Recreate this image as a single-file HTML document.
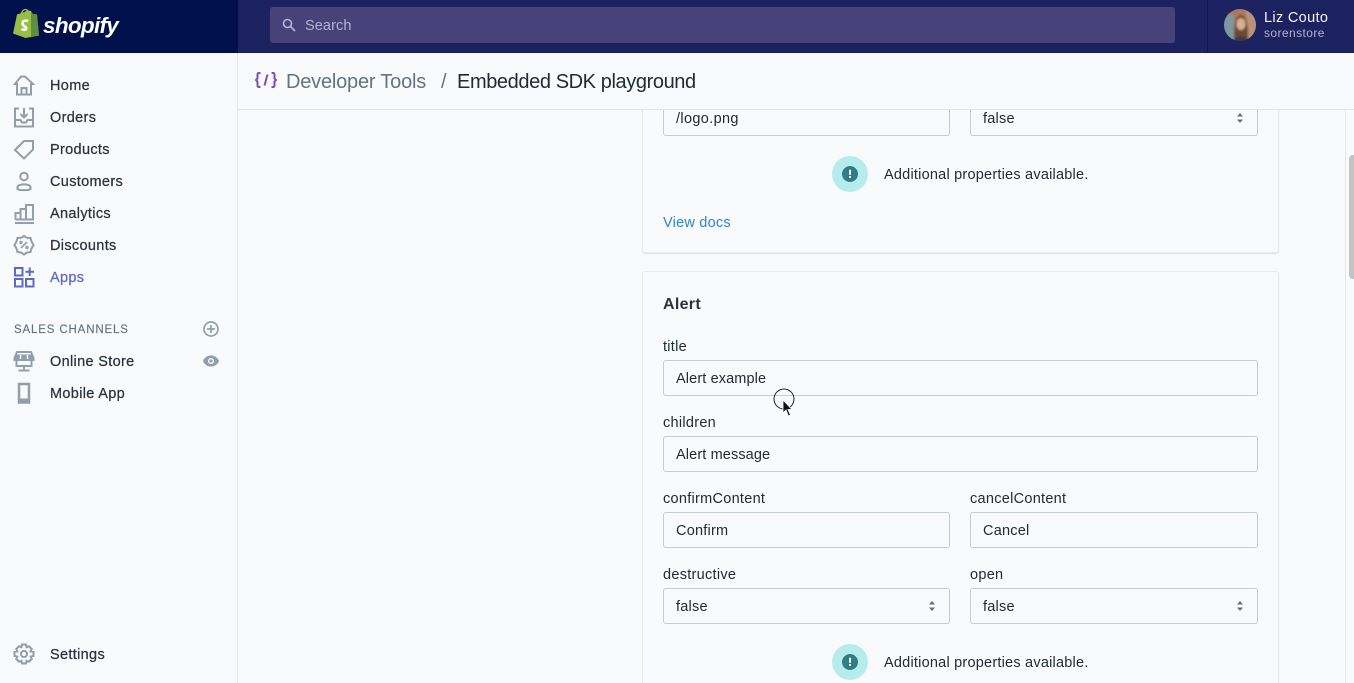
<!DOCTYPE html>
<html><head><meta charset="utf-8"><style>
*{box-sizing:border-box}
html,body{margin:0;padding:0;width:1354px;height:683px;overflow:hidden;background:#f9fafb;font-family:"Liberation Sans",sans-serif;color:#212b36}
#w{position:relative;width:1354px;height:683px;overflow:hidden;background:#f9fafb}
.a{position:absolute}
.t{position:absolute;font-size:14.5px;line-height:20px;white-space:nowrap;letter-spacing:.22px}
.nav{position:absolute;left:50px;font-size:14.5px;line-height:20px;font-weight:400;letter-spacing:.33px;color:#2a3440;-webkit-text-stroke:.25px #2a3440;white-space:nowrap}
.ic{position:absolute;left:13px;width:22px;height:22px;fill:none;stroke:#919eab;stroke-width:2}
.in{position:absolute;height:36px;border:1px solid #c4cdd5;border-radius:3px;background:#f9fafb;font-size:14.5px;line-height:36px;padding-left:12px;letter-spacing:.22px;color:#212b36;white-space:nowrap}
.lb{position:absolute;font-size:14.5px;line-height:20px;letter-spacing:.28px;color:#212b36;white-space:nowrap}
.ar{position:absolute;right:13px;top:11px;width:8px;height:12px}
.card{position:absolute;left:642px;width:637px;background:#f9fafb;border:1px solid #e8eaed;border-radius:3px;box-shadow:0 1px 1px rgba(33,43,54,.12)}
</style></head><body><div id="w">
<!-- top bar -->
<div class="a" style="left:0;top:0;width:1354px;height:53px;background:#1c2260"></div>
<div class="a" style="left:0;top:0;width:238px;height:53px;background:#00104b"></div>
<div class="a" style="left:1207px;top:0;width:1px;height:53px;background:#101650"></div>
<svg class="a" style="left:12px;top:8px" width="28" height="31" viewBox="0 0 28 31"><path d="M1 25.5 5 6.5 17 2.5 19 3 21 6 25 6.5 27 27.5 13.5 30Z" fill="#95bf47"/><path d="M19 3 21 6 25 6.5 27 27.5 19 29Z" fill="#5e8e3e"/><path d="M9 8C9 4 11.500 1.500 13.500 1.500S17 3.500 17 7M12.500 7C12.500 5 14 3 15.500 3" fill="none" stroke="#95bf47" stroke-width="1.300"/><path d="M16 13.200C14 12 10.500 12.500 10.500 15.500C10.500 18.300 14.200 18 14.200 20.300C14.200 22 11.800 22.300 9.500 21" fill="none" stroke="#fff" stroke-width="2.500"/></svg>
<div class="a" style="left:43px;top:11px;font-style:italic;font-weight:700;font-size:22.5px;line-height:30px;color:#fff;letter-spacing:-.7px">shopify</div>
<div class="a" style="left:270px;top:7px;width:905px;height:36px;background:#47437a;border-radius:3px"></div>
<svg class="a" style="left:281px;top:17px" width="16" height="16" viewBox="0 0 16 16" fill="none" stroke="#b9b7d1" stroke-width="1.600"><circle cx="6.500" cy="6.500" r="4"/><path d="M9.500 9.500 14 14"/></svg>
<div class="t" style="left:305px;top:16px;color:#b4b2cd;letter-spacing:.1px">Search</div>
<svg class="a" style="left:1224px;top:9px" width="32" height="32" viewBox="0 0 32 32"><defs><clipPath id="c"><circle cx="16" cy="16" r="16"/></clipPath><filter id="b"><feGaussianBlur stdDeviation="1"/></filter></defs><g clip-path="url(#c)"><g filter="url(#b)"><rect x="-2" y="-2" width="36" height="36" fill="#a9785f"/><rect x="-2" y="6" width="12" height="28" fill="#7f96a0"/><rect x="22" y="-2" width="12" height="36" fill="#b99377"/><path d="M10 32C10 14 11 7 17 6 24 7 24 18 24 32Z" fill="#6e4936"/><ellipse cx="17" cy="15" rx="4.500" ry="6" fill="#dcae93"/><path d="M9 34C10 25 24 25 26 34Z" fill="#3c3a49"/></g></g></svg>
<div class="a" style="left:1264px;top:9px;font-size:14.500px;line-height:19px;letter-spacing:.33px;color:#f4f4f8">Liz Couto</div>
<div class="a" style="left:1264px;top:25px;font-size:12px;line-height:16px;letter-spacing:.42px;color:#b0b1cc">sorenstore</div>
<!-- sidebar -->
<div class="a" style="left:237px;top:53px;width:1px;height:630px;background:#e3e6e9"></div>
<svg class="ic" style="top:74px" viewBox="0 0 22 22"><path d="M2 10 8 2.500H12L20 10H18V20.500H4V10ZM8.500 20V14H13.500V20"/></svg>
<div class="nav" style="top:76px">Home</div>
<svg class="ic" style="top:106px" viewBox="0 0 22 22"><path d="M6 2.500H2V20.500H20V2.500H16M2 14H7.500L9 16.500H13L14.500 14H20M11 2V11M7.500 8 11 11.500 14.500 8"/></svg>
<div class="nav" style="top:108px">Orders</div>
<svg class="ic" style="top:138px" viewBox="0 0 22 22"><path d="M2 12 11 3H20V11.500L11 20.500ZM16 7.500H16.100"/></svg>
<div class="nav" style="top:140px">Products</div>
<svg class="ic" style="top:170px" viewBox="0 0 22 22"><circle cx="11" cy="6.500" r="3.800"/><path d="M4.500 17C4.500 13.500 17.500 13.500 17.500 17V19C17.500 20.500 4.500 20.500 4.500 19Z"/></svg>
<div class="nav" style="top:172px">Customers</div>
<svg class="ic" style="top:202px" viewBox="0 0 22 22"><path d="M2 21H21M2.500 17.500V11H7.500V17.500M7.500 17.500V7H13V17.500M13 17.500V3H20V17.500H2.500"/></svg>
<div class="nav" style="top:204px">Analytics</div>
<svg class="ic" style="top:234px" viewBox="0 0 22 22"><path d="M11 2 14 3.800 17.500 4 18.500 7.500 20.500 11 18.500 14.500 17.500 18 14 18.500 11 20.500 8 18.500 4.500 18 3.500 14.500 1.500 11 3.500 7.500 4.500 4 8 3.800Z"/><path d="M14 8 8 14" stroke-width="1.600"/><circle cx="8" cy="8.500" r=".7"/><circle cx="14" cy="13.500" r=".7"/></svg>
<div class="nav" style="top:236px">Discounts</div>
<svg class="ic" style="top:266px;stroke:#5c6ac4" viewBox="0 0 22 22"><rect x="2" y="2" width="7.500" height="7.500"/><rect x="2" y="13" width="7.500" height="7.500"/><rect x="13" y="13" width="7.500" height="7.500"/><path d="M16.700 1.500V10M12.500 5.700H21"/></svg>
<div class="nav" style="top:268px;color:#5c6ac4;-webkit-text-stroke:.25px #5c6ac4">Apps</div>
<div class="a" style="left:14px;top:322px;font-size:11.500px;line-height:16px;letter-spacing:.85px;color:#637381;-webkit-text-stroke:.15px #637381">SALES CHANNELS</div>
<svg class="a" style="left:203px;top:321px" width="16" height="16" viewBox="0 0 16 16" fill="none" stroke="#919eab" stroke-width="1.700"><circle cx="8" cy="8" r="7"/><path d="M8 4V12M4 8H12"/></svg>
<svg class="ic" style="top:350px" viewBox="0 0 22 22"><path d="M4 2H18L20.500 8V10H1.500V8ZM3.500 10V16H18.500V10M11 16V20M5.500 20.500H16.500"/><path d="M2 4.500H20V9H2Z" fill="#919eab" stroke="none"/><path d="M7.500 5V9M14.500 5V9" stroke="#f9fafb" stroke-width="1.500"/></svg>
<div class="nav" style="top:352px">Online Store</div>
<svg class="a" style="left:203px;top:355px" width="16" height="12" viewBox="0 0 16 12"><path d="M0 6C3 -1.500 13 -1.500 16 6 13 13.500 3 13.500 0 6Z" fill="#919eab"/><circle cx="8" cy="6" r="3" fill="#f9fafb"/><circle cx="8" cy="6" r="1.600" fill="#919eab"/></svg>
<svg class="ic" style="top:382px" viewBox="0 0 22 22"><path d="M6 2H16V20.500H6Z" stroke-width="2.500"/><path d="M6 17.500H16V20.500H6Z" fill="#919eab"/></svg>
<div class="nav" style="top:384px">Mobile App</div>
<svg class="ic" style="top:643px" viewBox="0 0 22 22"><path d="M9 1.500H13L13.600 4.300 16 3.300 18.700 6 17.500 8.400 20.500 9V13L17.700 13.600 18.700 16 16 18.700 13.600 17.700 13 20.500H9L8.400 17.700 6 18.700 3.300 16 4.300 13.600 1.500 13V9L4.300 8.400 3.300 6 6 3.300 8.400 4.300Z"/><circle cx="11" cy="11" r="3"/></svg>
<div class="nav" style="top:645px">Settings</div>
<!-- main cards -->
<div class="card" style="top:90px;height:163px"></div>
<div class="card" style="top:271px;height:430px"></div>
<div class="in" style="left:663px;top:100px;width:287px;letter-spacing:.35px">/logo.png</div>
<div class="in" style="left:970px;top:100px;width:288px">false<svg class="ar" viewBox="0 0 8 12"><path d="M4 1 7 4.500H1ZM4 11 1 7.500H7Z" fill="#5f6d7c"/></svg></div>
<div class="a" style="left:832px;top:156px;width:36px;height:36px;border-radius:50%;background:#b7ecec"></div>
<svg class="a" style="left:842px;top:166px" width="16" height="16" viewBox="0 0 16 16"><circle cx="8" cy="8" r="8" fill="#2f7d87"/><rect x="7" y="3.800" width="2" height="5" fill="#fff"/><rect x="7" y="10" width="2" height="2" fill="#fff"/></svg>
<div class="t" style="left:884px;top:165px">Additional properties available.</div>
<div class="t" style="left:663px;top:213px;color:#2a85d5">View docs</div>
<div class="a" style="left:663px;top:295px;font-size:16px;line-height:20px;font-weight:700;letter-spacing:.3px;color:#2a3440">Alert</div>
<div class="lb" style="left:663px;top:337px">title</div>
<div class="in" style="left:663px;top:360px;width:595px;letter-spacing:.12px">Alert example</div>
<div class="lb" style="left:663px;top:413px">children</div>
<div class="in" style="left:663px;top:436px;width:595px;letter-spacing:.12px">Alert message</div>
<div class="lb" style="left:663px;top:489px">confirmContent</div>
<div class="lb" style="left:970px;top:489px">cancelContent</div>
<div class="in" style="left:663px;top:512px;width:287px">Confirm</div>
<div class="in" style="left:970px;top:512px;width:288px">Cancel</div>
<div class="lb" style="left:663px;top:565px">destructive</div>
<div class="lb" style="left:970px;top:565px">open</div>
<div class="in" style="left:663px;top:588px;width:287px">false<svg class="ar" viewBox="0 0 8 12"><path d="M4 1 7 4.500H1ZM4 11 1 7.500H7Z" fill="#5f6d7c"/></svg></div>
<div class="in" style="left:970px;top:588px;width:288px">false<svg class="ar" viewBox="0 0 8 12"><path d="M4 1 7 4.500H1ZM4 11 1 7.500H7Z" fill="#5f6d7c"/></svg></div>
<div class="a" style="left:832px;top:644px;width:36px;height:36px;border-radius:50%;background:#b7ecec"></div>
<svg class="a" style="left:842px;top:654px" width="16" height="16" viewBox="0 0 16 16"><circle cx="8" cy="8" r="8" fill="#2f7d87"/><rect x="7" y="3.800" width="2" height="5" fill="#fff"/><rect x="7" y="10" width="2" height="2" fill="#fff"/></svg>
<div class="t" style="left:884px;top:653px">Additional properties available.</div>
<!-- scrollbar -->
<div class="a" style="left:1345px;top:110px;width:1px;height:573px;background:#e6e8eb"></div>
<div class="a" style="left:1349px;top:155px;width:5px;height:124px;background:#c3c3c3;border-radius:4px 0 0 4px"></div>
<!-- header band -->
<div class="a" style="left:238px;top:53px;width:1116px;height:57px;background:#f9fafb;border-bottom:1px solid #e3e6e9"></div>
<svg class="a" style="left:255px;top:72px" width="22" height="16" viewBox="0 0 22 16" fill="none" stroke="#7a4eb5" stroke-width="2"><path d="M5.500 1H4C3 1 2.500 1.500 2.500 2.500V6.500L1 8 2.500 9.500V13.500C2.500 14.500 3 15 4 15H5.500M16.500 1H18C19 1 19.500 1.500 19.500 2.500V6.500L21 8 19.500 9.500V13.500C19.500 14.500 19 15 18 15H16.500"/><path d="M12.500 2.500 9.500 13.500"/></svg>
<div class="a" style="left:286px;top:70px;font-size:20px;line-height:24px;letter-spacing:-.2px;color:#637381;white-space:nowrap">Developer Tools</div>
<div class="a" style="left:441px;top:70px;font-size:20px;line-height:24px;color:#637381">/</div>
<div class="a" style="left:457px;top:70px;font-size:20px;line-height:24px;letter-spacing:-.4px;color:#212b36;white-space:nowrap">Embedded SDK playground</div>
<!-- cursor -->
<svg class="a" style="left:773px;top:388px" width="24" height="30" viewBox="0 0 24 30"><circle cx="11" cy="11" r="10" fill="none" stroke="#222" stroke-width="1"/><path d="M10 12V25L13 22 15.500 28 17.500 27 15 21.500H19Z" fill="#111" stroke="#fff" stroke-width=".8"/></svg>
</div></body></html>
